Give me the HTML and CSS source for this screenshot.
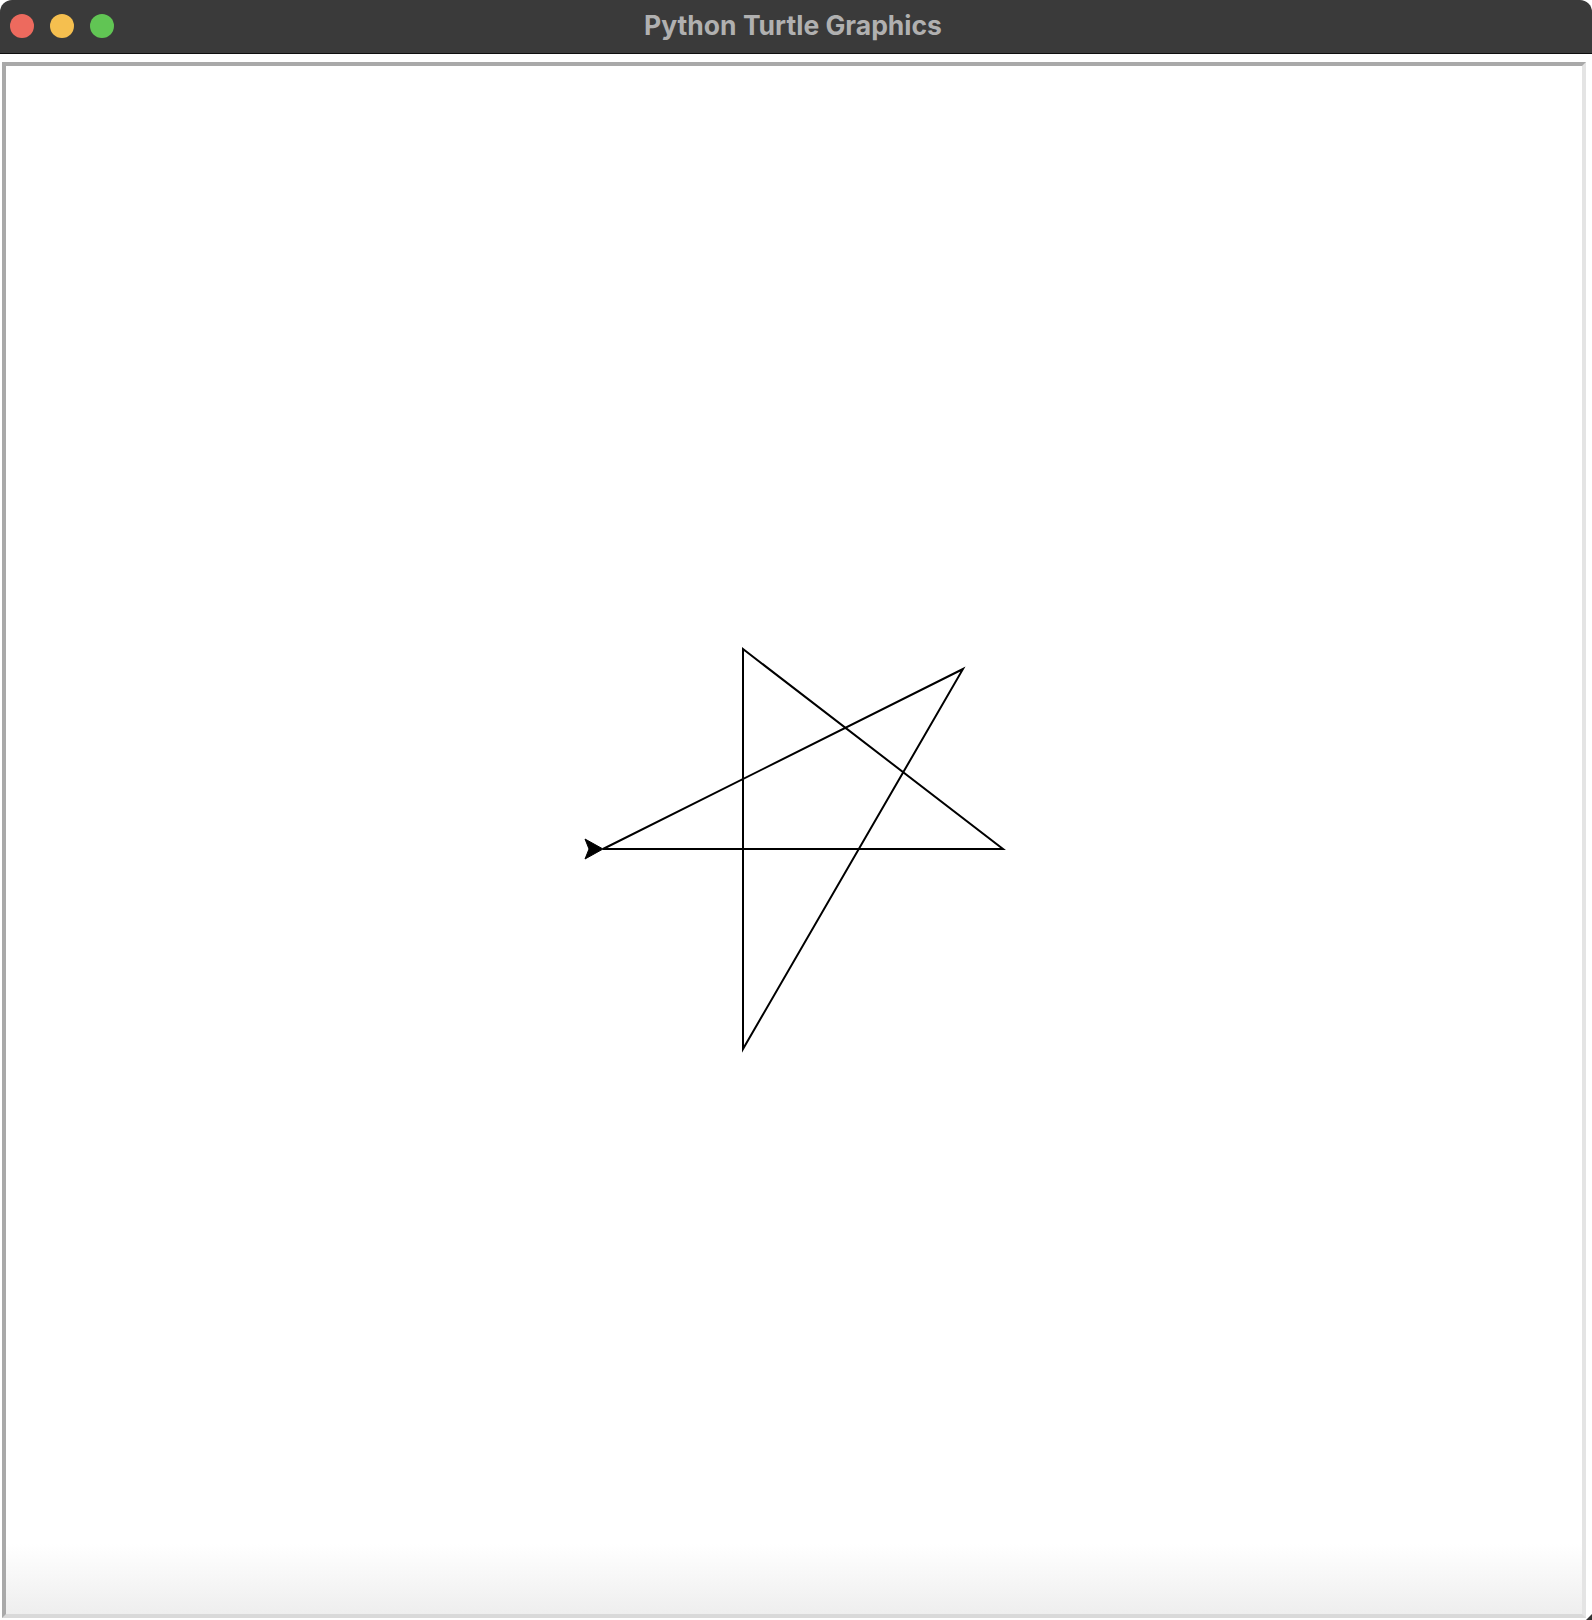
FILE: index.html
```html
<!DOCTYPE html>
<html>
<head>
<meta charset="utf-8">
<title>Python Turtle Graphics</title>
<link rel="stylesheet" href="styles.css">
</head>
<body>
<div class="window">
  <div class="titlebar">
    <div class="lights">
      <span class="light red"></span>
      <span class="light yellow"></span>
      <span class="light green"></span>
    </div>
    <div class="title">Python Turtle Graphics</div>
  </div>
  <div class="frame">
    <div class="canvas">
      <svg class="drawing" viewBox="0 0 1576 1548" preserveAspectRatio="none">
        <polyline class="star" points="597,783 997,783 737,583 737,983 957,603 597,783"/>
        <polygon class="turtle" points="597,783 579,773 583,783 579,793"/>
      </svg>
    </div>
  </div>
  <div class="grip"></div>
</div>
</body>
</html>
```

FILE: styles.css
```css
html, body {
  margin: 0;
  padding: 0;
  background: #ffffff;
}

.window {
  position: relative;
  width: 1592px;
  height: 1620px;
  display: flex;
  flex-direction: column;
  background: #ffffff;
}

.titlebar {
  position: relative;
  height: 53px;
  flex: 0 0 53px;
  background: #3a3a3a;
  border-bottom: 1px solid #0e0e0e;
  border-radius: 12px 12px 0 0;
  display: flex;
  align-items: center;
  justify-content: center;
}

.lights {
  position: absolute;
  left: 10px;
  top: 14px;
  display: flex;
  gap: 16px;
}

.light {
  width: 24px;
  height: 24px;
  border-radius: 50%;
  display: block;
}

.red { background: #ed6a5e; }
.yellow { background: #f5bf4f; }
.green { background: #61c554; }

.title {
  font-family: "Inter", "Liberation Sans", sans-serif;
  font-weight: 700;
  font-size: 26.5px;
  letter-spacing: 0;
  color: #b0b0b0;
  margin-left: -6px;
  margin-top: -3px;
}

.frame {
  flex: 1 1 auto;
  padding: 8px 6px 2px 2px;
  display: flex;
}

.canvas {
  flex: 1 1 auto;
  border-style: solid;
  border-width: 4px;
  border-color: #a9a9a9 #e4e4e4 #d9d9d9 #a9a9a9;
  background: linear-gradient(to bottom, #ffffff 0, #ffffff calc(100% - 70px), #eeeeee 100%);
  display: flex;
}

.drawing {
  width: 1576px;
  height: 1548px;
  display: block;
}

.star {
  fill: none;
  stroke: #000000;
  stroke-width: 2;
  stroke-linejoin: miter;
}

.turtle {
  fill: #000000;
  stroke: #000000;
  stroke-width: 1;
}

.grip {
  position: absolute;
  right: 0;
  bottom: 0;
  width: 0;
  height: 0;
  border-style: solid;
  border-width: 0 0 6px 6px;
  border-color: transparent transparent #333333 transparent;
}
```
